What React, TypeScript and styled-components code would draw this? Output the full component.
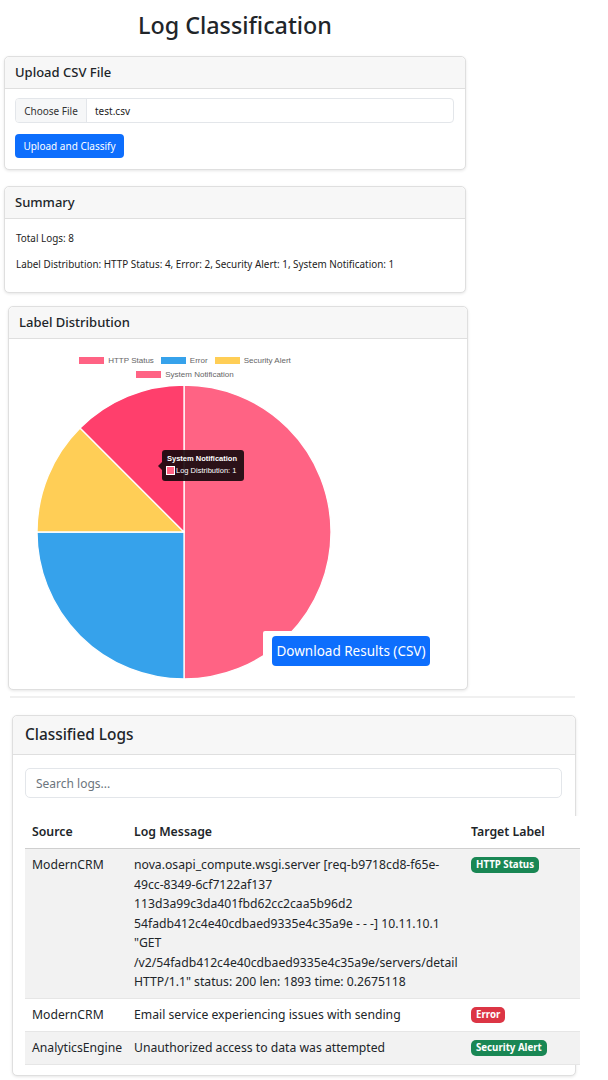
import React from "react";
import styled, { createGlobalStyle } from "styled-components";

const Global = createGlobalStyle`
  html, body { margin: 0; padding: 0; background: #fff; }
  body { font-family: "Noto Sans", "Open Sans", sans-serif; color: #212529; }
  * { box-sizing: border-box; }
`;

const Page = styled.div`
  width: 608px;
  height: 1080px;
  overflow: hidden;
  display: flex;
  flex-direction: column;
`;

const TopColumn = styled.div`
  width: 462px;
  margin-left: 4px;
  display: flex;
  flex-direction: column;
`;

const Title = styled.h1`
  margin: 0;
  height: 56px;
  display: flex;
  align-items: center;
  justify-content: center;
  font-size: 23.3px;
  font-weight: 500;
  color: #212529;
  padding-bottom: 7px;
`;

const Card = styled.section<{ $mt?: number; $ml?: number; $w?: number; $h?: number }>`
  position: relative;
  margin-top: ${(p) => p.$mt ?? 0}px;
  margin-left: ${(p) => p.$ml ?? 0}px;
  width: ${(p) => (p.$w ? `${p.$w}px` : "100%")};
  height: ${(p) => (p.$h ? `${p.$h}px` : "auto")};
  border: 1px solid #dfdfdf;
  border-radius: 5px;
  background: #fff;
  box-shadow: 0 1px 3px rgba(0, 0, 0, 0.1);
  display: flex;
  flex-direction: column;
  flex-shrink: 0;
`;

const CardHeader = styled.div<{ $h: number; $size: number; $pl: number }>`
  height: ${(p) => p.$h}px;
  padding-left: ${(p) => p.$pl}px;
  padding-bottom: 2px;
  display: flex;
  align-items: center;
  background: #f7f7f7;
  border-bottom: 1px solid #dfdfdf;
  border-radius: 5px 5px 0 0;
  font-size: ${(p) => p.$size}px;
  font-weight: 500;
  color: #212529;
`;

const CardBody = styled.div<{ $pad: string }>`
  padding: ${(p) => p.$pad};
  display: flex;
  flex-direction: column;
`;

const FileInput = styled.div`
  height: 25px;
  border: 1px solid #e3e6ea;
  border-radius: 4px;
  display: flex;
  align-items: stretch;
  font-size: 10px;
  overflow: hidden;
`;

const FileButton = styled.div`
  width: 71px;
  background: #f6f7f8;
  border-right: 1px solid #e3e6ea;
  display: flex;
  align-items: center;
  justify-content: center;
  color: #333;
`;

const FileName = styled.div`
  display: flex;
  align-items: center;
  padding-left: 8px;
  color: #222;
`;

const PrimaryButton = styled.button<{ $w: number; $h: number; $size: number }>`
  width: ${(p) => p.$w}px;
  height: ${(p) => p.$h}px;
  padding: 0;
  border: none;
  border-radius: 4px;
  background: #0d6efd;
  color: #fff;
  font-family: inherit;
  font-size: ${(p) => p.$size}px;
  display: flex;
  align-items: center;
  justify-content: center;
`;

const UploadButton = styled(PrimaryButton)`
  margin-top: 11px;
`;

const Para = styled.p`
  margin: 0;
  font-size: 9.9px;
  line-height: 16px;
  color: #222;
  & + & {
    margin-top: 10px;
  }
`;

const ChartArea = styled.div`
  width: 320px;
  margin-left: 16px;
  display: flex;
  flex-direction: column;
  align-items: center;
`;

const Legend = styled.div`
  width: 240px;
  display: flex;
  flex-wrap: wrap;
  justify-content: center;
  column-gap: 7px;
  font-family: "Liberation Sans", Arial, sans-serif;
  font-size: 8px;
  color: #666;
`;

const LegendItem = styled.div`
  height: 14px;
  display: flex;
  align-items: center;
  gap: 4px;
`;

const Swatch = styled.span<{ $c: string }>`
  width: 25px;
  height: 7px;
  background: ${(p) => p.$c};
`;

const PieSvg = styled.svg`
  display: block;
  margin-top: 1px;
`;

const Tooltip = styled.div`
  position: absolute;
  left: 153px;
  top: 143px;
  width: 82px;
  height: 31px;
  padding: 4px 4px;
  background: rgba(20, 8, 12, 0.9);
  border-radius: 3px;
  font-family: "Liberation Sans", Arial, sans-serif;
  font-size: 7.5px;
  color: #fff;
  display: flex;
  flex-direction: column;
  gap: 3px;
  &::before {
    content: "";
    position: absolute;
    left: -4px;
    top: 12px;
    border: 4px solid transparent;
    border-left: none;
    border-right-color: rgba(20, 8, 12, 0.9);
  }
`;

const TipTitle = styled.div`
  font-weight: 700;
  padding-left: 1px;
`;

const TipRow = styled.div`
  display: flex;
  align-items: center;
  gap: 1px;
`;

const TipBox = styled.span`
  width: 9px;
  height: 9px;
  border: 1px solid #fff;
  background: #ff6384;
`;

const DownloadWrap = styled.div`
  position: absolute;
  left: 254px;
  top: 324px;
  padding: 5px 9px 6px;
  background: #fff;
  border-top-left-radius: 2px;
`;

const Divider = styled.div`
  margin: 6px 0 0 10px;
  width: 565px;
  height: 2px;
  background: #f0f0f0;
  flex-shrink: 0;
`;

const SearchInput = styled.div`
  height: 30px;
  border: 1px solid #e3e6ea;
  border-radius: 5px;
  display: flex;
  align-items: center;
  padding-left: 10px;
  font-size: 12px;
  color: #6c757d;
`;

const Table = styled.table`
  margin-top: 18px;
  width: 555px;
  table-layout: fixed;
  border-collapse: collapse;
  background: #fff;
  font-size: 12.2px;
  color: #212529;
`;

const Th = styled.th<{ $w?: number }>`
  text-align: left;
  font-weight: 600;
  font-size: 12.3px;
  padding: 6px 7px 6px;
  border-bottom: 1px solid #cfcfcf;
  width: ${(p) => (p.$w ? `${p.$w}px` : "auto")};
  line-height: 19.5px;
  white-space: nowrap;
`;

const Tr = styled.tr<{ $striped?: boolean }>`
  background: ${(p) => (p.$striped ? "#f2f2f2" : "#fff")};
  border-bottom: 1px solid #e6e6e6;
`;

const Td = styled.td`
  vertical-align: top;
  padding: 6.5px 7px 6px;
  line-height: 19.5px;
  white-space: nowrap;
`;

const Badge = styled.span<{ $c: string }>`
  display: inline-flex;
  align-items: center;
  height: 16px;
  padding: 0 5px;
  border-radius: 5px;
  background: ${(p) => p.$c};
  color: #fff;
  font-size: 9.7px;
  font-weight: 700;
  vertical-align: middle;
  line-height: 16px;
  position: relative;
  top: -1px;
`;

const pieC = { x: 159, y: 150, r: 147 };
const pt = (deg: number) => {
  const a = (deg * Math.PI) / 180;
  return [pieC.x + pieC.r * Math.sin(a), pieC.y - pieC.r * Math.cos(a)];
};
const slice = (a0: number, a1: number) => {
  const [x0, y0] = pt(a0);
  const [x1, y1] = pt(a1);
  const large = a1 - a0 > 180 ? 1 : 0;
  return `M${pieC.x},${pieC.y} L${x0.toFixed(2)},${y0.toFixed(2)} A${pieC.r},${pieC.r} 0 ${large} 1 ${x1.toFixed(2)},${y1.toFixed(2)} Z`;
};

const slices = [
  { a0: 0, a1: 180, c: "#ff6384" },
  { a0: 180, a1: 270, c: "#36a2eb" },
  { a0: 270, a1: 315, c: "#ffce56" },
  { a0: 315, a1: 360, c: "#ff3f6c" },
];

const rows = [
  {
    src: "ModernCRM",
    msg: [
      "nova.osapi_compute.wsgi.server [req-b9718cd8-f65e-",
      "49cc-8349-6cf7122af137",
      "113d3a99c3da401fbd62cc2caa5b96d2",
      "54fadb412c4e40cdbaed9335e4c35a9e - - -] 10.11.10.1",
      "\"GET",
      "/v2/54fadb412c4e40cdbaed9335e4c35a9e/servers/detail",
      "HTTP/1.1\" status: 200 len: 1893 time: 0.2675118",
    ],
    label: "HTTP Status",
    c: "#198754",
  },
  { src: "ModernCRM", msg: ["Email service experiencing issues with sending"], label: "Error", c: "#dc3545" },
  { src: "AnalyticsEngine", msg: ["Unauthorized access to data was attempted"], label: "Security Alert", c: "#198754" },
];

export default function App() {
  return (
    <Page>
      <Global />
      <TopColumn>
        <Title>Log Classification</Title>
        <Card>
          <CardHeader $h={32} $size={13} $pl={10}>Upload CSV File</CardHeader>
          <CardBody $pad="9px 11px 11px 10px">
            <FileInput>
              <FileButton>Choose File</FileButton>
              <FileName>test.csv</FileName>
            </FileInput>
            <UploadButton $w={109} $h={24} $size={10}>Upload and Classify</UploadButton>
          </CardBody>
        </Card>
        <Card $mt={16}>
          <CardHeader $h={32} $size={13} $pl={10}>Summary</CardHeader>
          <CardBody $pad="11px 11px 20px 11px">
            <Para>Total Logs: 8</Para>
            <Para>Label Distribution: HTTP Status: 4, Error: 2, Security Alert: 1, System Notification: 1</Para>
          </CardBody>
        </Card>
        <Card $mt={13} $ml={4} $w={460} $h={384}>
          <CardHeader $h={32} $size={13} $pl={10}>Label Distribution</CardHeader>
          <CardBody $pad="14px 0 0 0">
            <ChartArea>
              <Legend>
                <LegendItem><Swatch $c="#ff6384" />HTTP Status</LegendItem>
                <LegendItem><Swatch $c="#36a2eb" />Error</LegendItem>
                <LegendItem><Swatch $c="#ffce56" />Security Alert</LegendItem>
                <LegendItem><Swatch $c="#ff6384" />System Notification</LegendItem>
              </Legend>
              <PieSvg width={320} height={300} viewBox="0 0 320 300">
                {slices.map((s, i) => (
                  <path key={i} d={slice(s.a0, s.a1)} fill={s.c} stroke="#fff" strokeWidth={1.3} strokeLinejoin="round" />
                ))}
              </PieSvg>
            </ChartArea>
          </CardBody>
          <Tooltip>
            <TipTitle>System Notification</TipTitle>
            <TipRow><TipBox />Log Distribution: 1</TipRow>
          </Tooltip>
          <DownloadWrap>
            <PrimaryButton $w={158} $h={30} $size={13.5}>Download Results (CSV)</PrimaryButton>
          </DownloadWrap>
        </Card>
      </TopColumn>
      <Divider />
      <Card $mt={17} $ml={12} $w={564}>
        <CardHeader $h={39} $size={15.4} $pl={12}>Classified Logs</CardHeader>
        <CardBody $pad="13px 13px 10px 12px">
          <SearchInput>Search logs...</SearchInput>
          <Table>
            <thead>
              <tr>
                <Th $w={102}>Source</Th>
                <Th $w={337}>Log Message</Th>
                <Th>Target Label</Th>
              </tr>
            </thead>
            <tbody>
              {rows.map((r, i) => (
                <Tr key={i} $striped={i % 2 === 0}>
                  <Td>{r.src}</Td>
                  <Td>
                    {r.msg.map((l, j) => (
                      <React.Fragment key={j}>
                        {j > 0 && <br />}
                        {l}
                      </React.Fragment>
                    ))}
                  </Td>
                  <Td><Badge $c={r.c}>{r.label}</Badge></Td>
                </Tr>
              ))}
            </tbody>
          </Table>
        </CardBody>
      </Card>
    </Page>
  );
}
